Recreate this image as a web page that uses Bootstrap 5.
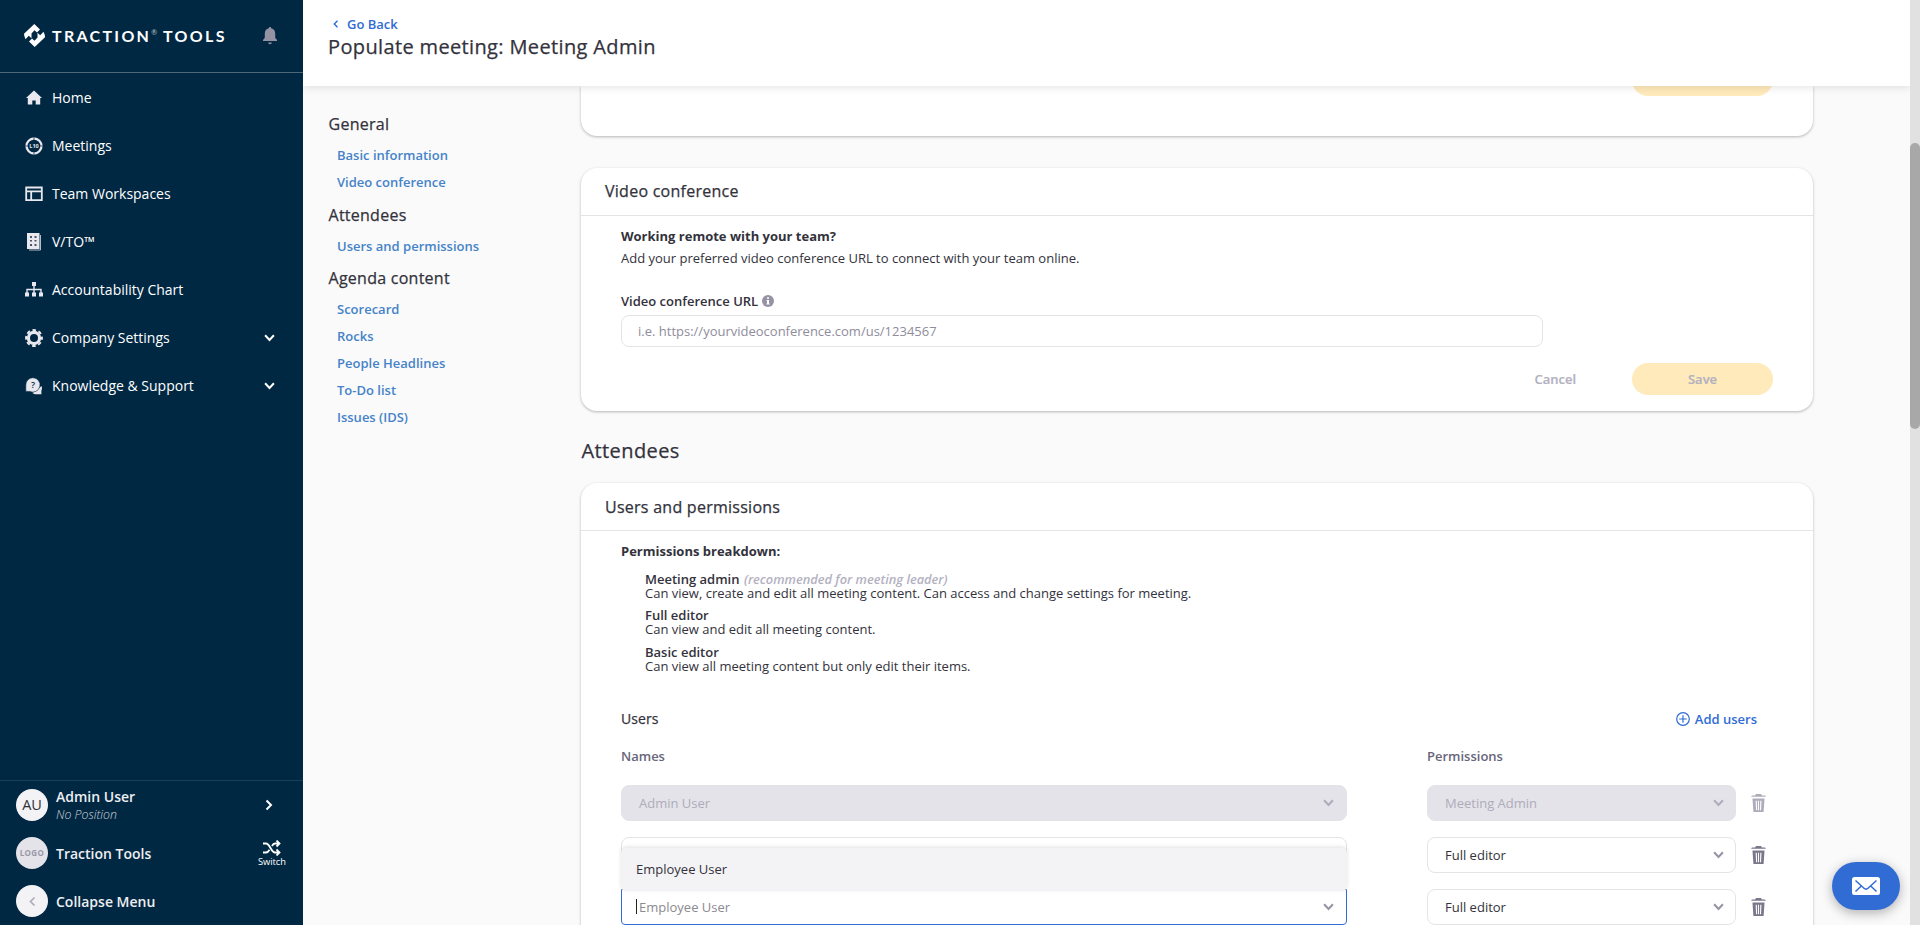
<!DOCTYPE html>
<html lang="en">
<head>
<meta charset="utf-8">
<title>Populate meeting: Meeting Admin</title>
<link href="https://cdn.jsdelivr.net/npm/bootstrap@5.3.0/dist/css/bootstrap.min.css" rel="stylesheet">
<style>
body{font-family:"Open Sans",sans-serif;font-size:13px;line-height:18px;color:#33323c;background:#fafafa;height:100vh;overflow:hidden}
svg{display:block;flex:none}
.side{width:303px;background:#002843;color:#fff;font-size:14px}
.brand-row{height:73px;border-bottom:1px solid #4d6879;padding:0 0 1px 24px}
.wordmark{font-family:Lato,sans-serif;font-weight:700;font-size:16px;letter-spacing:2.3px;margin-left:7px;width:190px;white-space:nowrap}
.wordmark sup{font-size:7px;font-weight:400;top:-7px;letter-spacing:0;margin-right:6px;opacity:.7}
.bell{margin-left:21px}
.side .nav{padding-top:1px}
.side .nav-link{height:48px;color:#fff;padding:0 28px 0 25px;display:flex;align-items:center}
.nav-label{margin-left:9px}
.side-foot{border-top:1px solid #1a3e5a}
.foot-row{height:48px;padding-left:16px}
.avatar{width:32px;height:32px;border-radius:50%;background:#f3f3f5;color:#33323c;display:flex;align-items:center;justify-content:center;flex:none;margin-right:8px;font-size:14.5px}
.logo-ava{background:#e4e3e9;color:#9a98a8;font-size:8px;font-weight:700;letter-spacing:.4px}
.foot-name{font-weight:600;line-height:19px;color:#eeeef1}
.foot-sub{font-size:12.3px;font-style:italic;font-weight:300;line-height:18px;color:#d0d3da}
.foot-arrow{margin-right:30px}
.switcher{margin-right:17px;font-size:9.3px;line-height:11px}
.top-bar{height:86px;background:#fff;box-shadow:0 2px 8px rgba(0,0,0,.1);z-index:3;position:relative;padding:15px 0 0 25px}
.go-back{color:#316cd4;font-weight:600;text-decoration:none;gap:8px;padding-left:5px}
.medium-text{-webkit-text-stroke:.25px currentColor;font-weight:400}
.page-title{font-size:20px;letter-spacing:.36px;line-height:27px;margin:0}
.toc{width:278px;padding:26px 0 0 25px}
.toc h2{font-size:16px;letter-spacing:.26px;line-height:24px;margin:0 0 10px;padding:0 0 0 .5px}
.toc a{display:block;color:#4583c8;font-weight:600;text-decoration:none;line-height:18px;margin:0 0 9px 9px}
.toc a:last-child{margin-bottom:11.5px}
.cards{width:1232px}
.panel{background:#fff;border:0;border-radius:16px;box-shadow:0 1px 3px rgba(0,0,0,.28)}
.panel-cut{height:50px;border-radius:0 0 16px 16px;margin-bottom:32px;padding-right:40px}
.cut-window{height:10px;overflow:hidden}
.panel-head{height:48px;border-bottom:1px solid #e4e4e8;padding:0 0 1px 24px;font-size:16px;letter-spacing:.26px}
.panel-in{padding:0 40px}
.lead-line{padding-top:11px}
.url-label{margin:25px 0 5px;gap:4px}
.url-field{width:922px}
.pill{width:141px;height:32px;border-radius:16px;background:#ffeabb;color:#b3b1bf;font-weight:600;border:0;font-size:13px;padding:0;-webkit-text-stroke:.2px currentColor}
.ghost{color:#b3b1bf;font-weight:600;margin-right:56px;-webkit-text-stroke:.2px currentColor}
.field{height:32px;border:1px solid #e4e4e8;border-radius:8px;font-size:13px;padding:0 16px;color:#33323c}
.field::placeholder{color:#8f8d9c;opacity:1}
.section-title{font-size:20px;letter-spacing:.4px;line-height:28px;margin:0;padding:26px 0 18px .5px}
.users-panel{height:520px}
.users-panel .panel-head{padding-bottom:0}
.pick{height:36px;border:1px solid #e4e4e8;border-radius:8px;background:#fff;padding:0 12px 0 17px}
.pick.off{background:#e4e3e9;color:#aeacba}
.pick-name{width:726px;margin-right:80px}
.pick-perm{width:309px;margin-right:15px;padding-right:11px}
.user-row{margin-bottom:16px}
.users-bar{margin-top:36px;padding-right:16px;height:20px}
.users-title{font-size:14px;letter-spacing:.1px}
.add-link{gap:5px;color:#316cd4}
.col-heads{margin:18px 0 20px;color:#67657a}
.names-head{width:806px}
.perms{padding:12px 0 0 24px}
.perms div{line-height:14px}
.perms .next-role{margin-top:8px}
.perms .last-role{margin-top:9px}
.perms strong{font-weight:600}
.hint{font-style:italic;font-weight:600;color:#b3b1bf;font-size:12.8px;margin-left:1px}
.focus-pick{border-color:#316cd4;border-radius:1px 1px 4px 4px;position:relative;color:#8b8a91}
.caret-bar{width:1px;height:15px;background:#222;position:absolute;left:14px;top:9px}
.drop{position:absolute;left:-1px;right:-1px;bottom:33px;height:43px;background:#f3f3f5;border-radius:5px;box-shadow:0 -1px 4px rgba(0,0,0,.12);padding:0 0 1px 15px;color:#33323c}
.scroll-track{width:10px;background:#e1e1e1;padding-top:143px}
.scroll-thumb{height:286px;border-radius:5px;background:#a8a8a8}
.chat{position:absolute;left:1832px;top:862px;width:68px;height:48px;border-radius:24px;background:#316cd4;border:0;box-shadow:0 3px 12px rgba(0,0,0,.3);z-index:5}
</style>
</head>
<body>
<svg width="0" height="0" class="position-absolute">
<symbol id="down" viewBox="0 0 10 7"><path d="M1 1l4 4.300 4-4.300" fill="none" stroke="currentColor" stroke-width="1.800"/></symbol>
<symbol id="trash" viewBox="0 0 14 17"><path d="M0 2.700L.8 1.300h3L4.600 0h4.800l.8 1.300h3L14 2.700zM1.300 4.300h11.400l-.9 12.700H2.200zM4.300 6.300l.4 9h1l-.3-9zm2.200 0v9h1v-9zm2.200 0l-.3 9h1l.4-9z" fill="currentColor" fill-rule="evenodd"/></symbol>
</svg>
<div class="d-flex h-100">
<aside class="side d-flex flex-column flex-shrink-0">
  <div class="brand-row d-flex align-items-center">
    <svg width="21" height="23" viewBox="0 0 21 23" fill="#fff"><path d="M10.300 0L16 5.500l-3 3-2.500-2.200-3 3.200v4.800L4.800 11.800 1.500 15.300Q0 12.500 0 9.800z"/><path d="M10.300 0L16 5.500l-3 3-2.500-2.200-3 3.200v4.800L4.800 11.800 1.500 15.300Q0 12.500 0 9.800z" transform="rotate(180 10.500 11.500)"/></svg>
    <div class="wordmark">TRACTION<sup>®</sup>TOOLS</div>
    <svg class="bell" width="14" height="18" viewBox="0 0 14 18" fill="#9593a3"><path d="M7 0c.7 0 1.200.5 1.200 1.200 2.600.6 4 2.500 4 5.300v4.200L14 13v1H0v-1l1.800-2.300V6.500c0-2.800 1.400-4.700 4-5.300C5.800.5 6.300 0 7 0zM5.200 15.500h3.600c0 1-.8 1.700-1.800 1.700s-1.800-.7-1.800-1.700z"/></svg>
  </div>
  <nav class="nav flex-column flex-nowrap flex-grow-1">
    <a class="nav-link" href="#"><svg width="18" height="18" viewBox="0 0 18 18" fill="#e8e8ee"><path d="M9 1.500l8 7.500h-1.800v6.500h-4.500v-4H7.300v4H2.800V9H1z"/></svg><span class="nav-label">Home</span></a>
    <a class="nav-link" href="#"><svg width="18" height="18" viewBox="0 0 18 18"><circle cx="9" cy="9" r="7.500" fill="none" stroke="#e8e8ee" stroke-width="2.300"/><path d="M9 0v3M9 15v3M0 9h3M15 9h3" stroke="#002843" stroke-width=".7"/><text x="9" y="11" text-anchor="middle" font-size="5.500" font-weight="700" fill="#e8e8ee">L10</text></svg><span class="nav-label">Meetings</span></a>
    <a class="nav-link" href="#"><svg width="18" height="18" viewBox="0 0 18 18" fill="none" stroke="#e8e8ee" stroke-width="1.800"><path d="M1.200 2.500h15.600v12.600H1.200zM1 6.300h16M6.200 6.500v8.500"/></svg><span class="nav-label">Team Workspaces</span></a>
    <a class="nav-link" href="#"><svg width="18" height="18" viewBox="0 0 18 18"><path d="M4 17h11.500V2" fill="none" stroke="#b9bcc7"/><path d="M2 0h12.500v16H2z" fill="#e8e8ee"/><path d="M5 3h2v2H5zm4.500 0h2v2h-2zM5 7h2v1.500H5zm4.500 0h2v1.500h-2zM5 11h2v2H5zm4.500 0h2v2h-2z" fill="#44566b"/></svg><span class="nav-label">V/TO™</span></a>
    <a class="nav-link" href="#"><svg width="18" height="18" viewBox="0 0 18 18" fill="#e8e8ee"><path d="M7 1h4v4H7zM0 11.500h4v4H0zm7 0h4v4H7zm7 0h4v4h-4z"/><path d="M9 5v7M2 12V8.500h14V12" fill="none" stroke="#e8e8ee" stroke-width="1.400"/></svg><span class="nav-label">Accountability Chart</span></a>
    <a class="nav-link" href="#"><svg width="18" height="18" viewBox="0 0 18 18"><circle cx="9" cy="9" r="5.600" fill="none" stroke="#e8e8ee" stroke-width="3.200"/><circle cx="9" cy="9" r="7.900" fill="none" stroke="#e8e8ee" stroke-width="2" stroke-dasharray="3.600 2.605" stroke-dashoffset="1.800"/></svg><span class="nav-label flex-grow-1">Company Settings</span><svg width="11" height="8"><use href="#down"/></svg></a>
    <a class="nav-link" href="#"><svg width="18" height="18" viewBox="0 0 18 18"><path d="M16.500 9c.7 1.700.6 3.200-.1 4.500v3.700h-3.600c-2 .4-4 0-5.300-1.200z" fill="#e8e8ee"/><path d="M8 .7a7.200 7.200 0 1 1-3.300 13.700H.8V8A7.200 7.200 0 0 1 8 .7z" fill="#e8e8ee" stroke="#002843" stroke-width=".6"/><text x="8" y="11.200" text-anchor="middle" font-size="9" font-weight="600" fill="#002843">?</text></svg><span class="nav-label flex-grow-1">Knowledge &amp; Support</span><svg width="11" height="8"><use href="#down"/></svg></a>
  </nav>
  <div class="side-foot">
    <div class="foot-row d-flex align-items-center"><div class="avatar">AU</div><div class="flex-grow-1"><div class="foot-name">Admin User</div><div class="foot-sub">No Position</div></div><svg class="foot-arrow" width="8" height="12" viewBox="0 0 8 12"><path d="M1.500 1.500L6 6l-4.500 4.500" fill="none" stroke="#fff" stroke-width="2"/></svg></div>
    <div class="foot-row d-flex align-items-center"><div class="avatar logo-ava">LOGO</div><div class="foot-name flex-grow-1">Traction Tools</div><div class="d-flex flex-column align-items-center switcher"><svg width="18" height="16" viewBox="0 0 18 16" fill="none" stroke="#fff" stroke-width="1.800"><path d="M0 3.500h3c4 0 5 9 9 9h4M0 12.500h3c1.500 0 2.600-1.200 3.500-2.800M9 6c.8-1.500 1.700-2.500 3-2.500h4M13.500.5l3 3-3 3M13.500 9.500l3 3-3 3"/></svg><span>Switch</span></div></div>
    <div class="foot-row d-flex align-items-center"><div class="avatar"><svg width="7" height="11" viewBox="0 0 7 11"><path d="M5.500 1.500l-4 4 4 4" fill="none" stroke="#aeacba" stroke-width="1.700"/></svg></div><div class="foot-name">Collapse Menu</div></div>
  </div>
</aside>
<main class="flex-grow-1 d-flex flex-column overflow-hidden">
  <header class="top-bar flex-shrink-0">
    <a href="#" class="go-back d-flex align-items-center"><svg width="6" height="8" viewBox="0 0 6 8"><path d="M4.500 .8L1.300 4l3.200 3.200" fill="none" stroke="#316cd4" stroke-width="1.400"/></svg>Go Back</a>
    <h1 class="page-title medium-text">Populate meeting: Meeting Admin</h1>
  </header>
  <div class="d-flex flex-grow-1 overflow-hidden">
    <nav class="toc flex-shrink-0">
      <h2 class="medium-text">General</h2><div><a href="#">Basic information</a><a href="#">Video conference</a></div>
      <h2 class="medium-text">Attendees</h2><div><a href="#">Users and permissions</a></div>
      <h2 class="medium-text">Agenda content</h2><div><a href="#">Scorecard</a><a href="#">Rocks</a><a href="#">People Headlines</a><a href="#">To-Do list</a><a href="#">Issues (IDS)</a></div>
    </nav>
    <div class="cards flex-shrink-0">
      <section class="panel panel-cut"><div class="cut-window d-flex justify-content-end align-items-end"><div class="pill flex-shrink-0"></div></div></section>
      <section class="panel">
        <div class="panel-head medium-text d-flex align-items-center">Video conference</div>
        <div class="panel-in">
          <div class="fw-bold lead-line">Working remote with your team?</div>
          <div class="pt-1">Add your preferred video conference URL to connect with your team online.</div>
          <label class="d-flex align-items-center fw-semibold url-label">Video conference URL<svg width="12" height="12" viewBox="0 0 12 12"><circle cx="6" cy="6" r="6" fill="#9593a3"/><path d="M5 2.200h2v1.600H5zM4.600 5H7v3.500h.6v1H4.500v-1H5V6h-.4z" fill="#fff"/></svg></label>
          <input class="form-control field url-field" placeholder="i.e. https://yourvideoconference.com/us/1234567">
          <div class="d-flex justify-content-end align-items-center py-3"><span class="ghost">Cancel</span><button class="pill">Save</button></div>
        </div>
      </section>
      <h2 class="section-title medium-text">Attendees</h2>
      <section class="panel users-panel">
        <div class="panel-head medium-text d-flex align-items-center">Users and permissions</div>
        <div class="panel-in">
          <div class="fw-bold lead-line">Permissions breakdown:</div>
          <div class="perms">
            <div><strong>Meeting admin</strong> <span class="hint">(recommended for meeting leader)</span></div><div>Can view, create and edit all meeting content. Can access and change settings for meeting.</div>
            <div class="next-role"><strong>Full editor</strong></div><div>Can view and edit all meeting content.</div>
            <div class="last-role"><strong>Basic editor</strong></div><div>Can view all meeting content but only edit their items.</div>
          </div>
          <div class="d-flex justify-content-between align-items-center users-bar"><span class="users-title medium-text">Users</span><a class="d-flex align-items-center text-decoration-none fw-semibold add-link" href="#"><svg width="14" height="14" viewBox="0 0 14 14" fill="none" stroke="#316cd4" stroke-width="1.200"><circle cx="7" cy="7" r="6.300"/><path d="M7 3.200v7.600M3.200 7h7.600"/></svg>Add users</a></div>
          <div class="d-flex fw-semibold col-heads"><span class="names-head">Names</span><span>Permissions</span></div>
          <div class="user-row d-flex align-items-center">
            <div class="pick off pick-name d-flex align-items-center justify-content-between">Admin User<svg width="11" height="8"><use href="#down"/></svg></div>
            <div class="pick off pick-perm d-flex align-items-center justify-content-between">Meeting Admin<svg width="11" height="8"><use href="#down"/></svg></div>
            <svg width="15" height="18" color="#aeacba"><use href="#trash"/></svg>
          </div>
          <div class="user-row d-flex align-items-center">
            <div class="pick pick-name"></div>
            <div class="pick pick-perm d-flex align-items-center justify-content-between">Full editor<svg width="11" height="8" color="#9593a3"><use href="#down"/></svg></div>
            <svg width="15" height="18" color="#7a778b"><use href="#trash"/></svg>
          </div>
          <div class="user-row d-flex align-items-center">
            <div class="pick pick-name focus-pick d-flex align-items-center justify-content-between"><span class="caret-bar"></span>Employee User<svg width="11" height="8" color="#9593a3"><use href="#down"/></svg><div class="drop d-flex align-items-center">Employee User</div></div>
            <div class="pick pick-perm d-flex align-items-center justify-content-between">Full editor<svg width="11" height="8" color="#9593a3"><use href="#down"/></svg></div>
            <svg width="15" height="18" color="#7a778b"><use href="#trash"/></svg>
          </div>
        </div>
      </section>
    </div>
  </div>
</main>
<div class="scroll-track flex-shrink-0"><div class="scroll-thumb"></div></div>
</div>
<button class="chat d-flex align-items-center justify-content-center" aria-label="Messages"><svg width="28" height="18" viewBox="0 0 28 18"><rect width="28" height="18" rx="2.500" fill="#fff"/><path d="M3.500 3.500l8.500 7.700q2 1.800 4 0l8.500-7.700M3.500 14.500l5.500-5.300M24.500 14.500L19 9.200" fill="none" stroke="#316cd4" stroke-width="1.500"/></svg></button>
<script src="https://cdn.jsdelivr.net/npm/bootstrap@5.3.0/dist/js/bootstrap.bundle.min.js"></script>
</body>
</html>
